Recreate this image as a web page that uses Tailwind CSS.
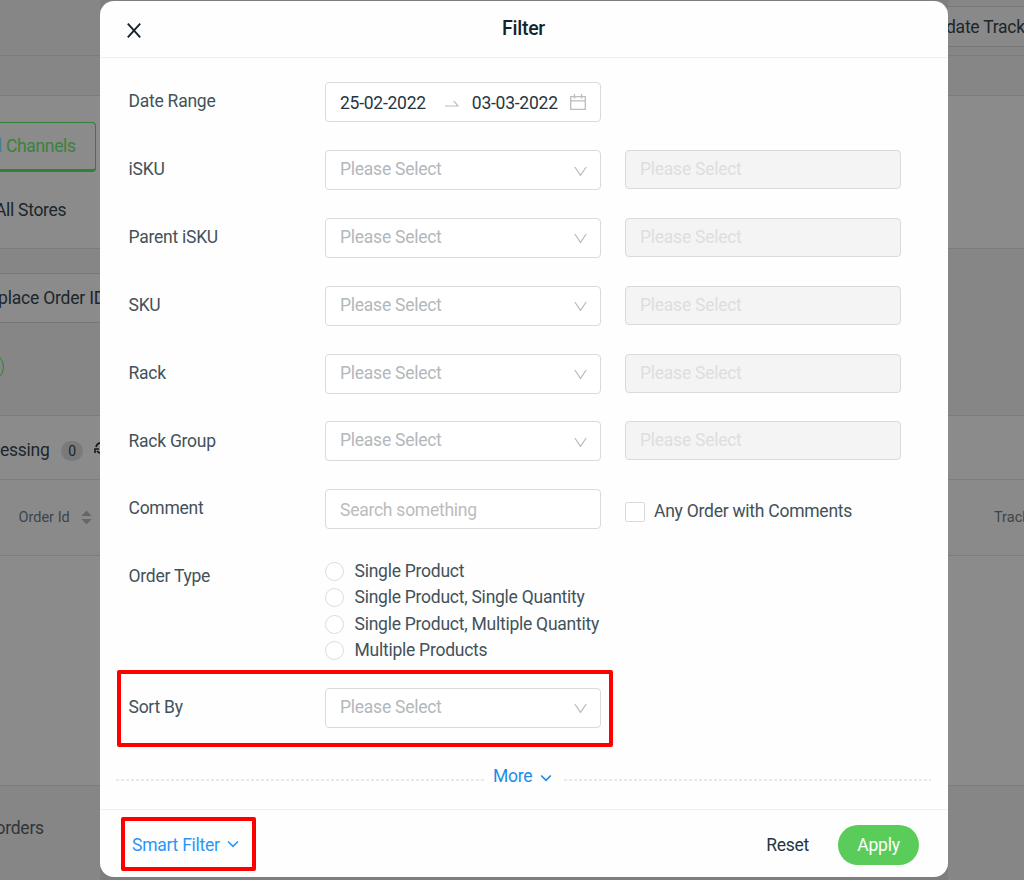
<!DOCTYPE html>
<html lang="en">
<head>
<meta charset="utf-8">
<title>Filter</title>
<script src="https://cdn.jsdelivr.net/npm/@tailwindcss/browser@4"></script>
</head>
<body class="font-['Roboto','Liberation_Sans',sans-serif] text-[17.5px] leading-6 tracking-[-0.25px]">
<div class="relative w-[1024px] h-[880px] overflow-hidden bg-[#8b8b8b] text-[#1c262c] whitespace-nowrap">

  <!-- page behind the dialog -->
  <div class="flex flex-col h-full">
    <div class="h-14 shrink-0 bg-[#868686] border-b border-[#7d7d7d] flex justify-end pt-1.5">
      <div class="w-[104px] h-[41px] border-y border-[#777777] bg-[#898989] flex items-center pl-[26px]"><span>date Track</span></div>
    </div>
    <div class="h-10 shrink-0 bg-[#868686] border-b border-[#7d7d7d]"></div>
    <div class="h-[153px] shrink-0 border-b border-[#7d7d7d] pt-[26px]">
      <div class="w-24 h-[50px] border border-l-0 border-b-[3px] border-[#338038] rounded-r-[4px] text-[#3a823d] flex items-center"><span class="text-[#4a7d96] -ml-[2px] w-[8px]">l</span><span class="tracking-[-0.35px]">Channels</span></div>
      <div class="mt-[26px] -ml-[5px]"><span class="tracking-[-0.3px]">All Stores</span></div>
    </div>
    <div class="h-[167px] shrink-0 bg-[#868686] border-b border-[#7d7d7d] pt-6">
      <div class="w-[110px] h-[50px] border-y border-[#777777] bg-[#8b8b8b] flex items-center"><span class="-ml-[2px] tracking-[-0.2px]">place Order ID</span></div>
      <div class="mt-[29px] -ml-[26px] w-[30px] h-[30px] rounded-full border border-[#338038]"></div>
    </div>
    <div class="h-16 shrink-0 border-b border-[#7d7d7d] flex items-center pt-[4px]">
      <span>essing</span>
      <span class="ml-[11.5px] w-[22px] h-5 rounded-full bg-[#7a7a7a] text-[14px] leading-[21px] text-center mt-[2px]">0</span>
      <svg class="ml-[11px] mb-[3px] shrink-0" width="14" height="14" viewBox="0 0 14 14" fill="none" stroke="#11191e" stroke-width="1.6"><path d="M2 6a5 5 0 0 1 9-2M12 8a5 5 0 0 1-9 2M1 12V8h4M12 1v4H8"/></svg>
    </div>
    <div class="h-[76px] shrink-0 border-b border-[#7d7d7d] bg-[#8a8a8a] flex items-center justify-between text-[14.5px] tracking-[0px] text-[#3d454a]">
      <div class="flex items-center pl-[18.5px] gap-[11px]"><span>Order Id</span>
        <svg class="shrink-0" width="11" height="15" viewBox="0 0 11 15" fill="#666"><path d="M5.500.500 10.500 6H.500zM5.500 14.500.500 9h10z"/></svg>
      </div>
      <div class="w-[30px]">Track</div>
    </div>
    <div class="h-[230px] shrink-0 border-b border-[#7d7d7d]"></div>
    <div class="grow bg-[#868686] pt-[30px] text-[#30363a]"><span class="-ml-[4.5px]">orders</span></div>
  </div>

  <!-- dialog -->
  <div class="absolute left-[100px] top-0 w-[848px] h-[880px] bg-[#7a7a7a]/60"></div>
  <div class="absolute left-[100px] top-px w-[848px] h-[876px] bg-[#fefefe] rounded-[14px] flex flex-col">
    <header class="h-[57px] shrink-0 border-b border-[#f0f0f0] relative flex items-center justify-center">
      <svg class="absolute left-[27px] top-[22px]" width="14" height="15" viewBox="0 0 14 15" fill="none" stroke="#13232d" stroke-width="1.9"><path d="M.8.700 13.200 14.300M13.200.700.800 14.300"/></svg>
      <h1 class="font-medium text-[19.5px] text-[#13232d] mb-[1px] mr-px">Filter</h1>
    </header>

    <div id="form" class="pt-[24.2px] pl-[28.5px] text-[#43525a]"></div>

    <div class="flex items-center h-6 mt-[15.800px] pl-4 pr-[17px] shrink-0">
      <div class="grow h-0.5 mt-[8px] bg-[repeating-linear-gradient(90deg,#e8e8e8_0_3px,transparent_3px_5px)]"></div>
      <div class="flex items-center w-[80px] pl-[9.5px] text-[#1d8ce8]"><span>More</span>
        <svg class="ml-[7.5px] mt-1 shrink-0" width="12" height="8" viewBox="0 0 12 8" fill="none" stroke="#1d8ce8" stroke-width="1.7"><path d="M1.200 1.500 6 6.300l4.800-4.800"/></svg></div>
      <div class="grow h-0.5 mt-[8px] bg-[repeating-linear-gradient(90deg,#e8e8e8_0_3px,transparent_3px_5px)]"></div>
    </div>

    <footer class="mt-auto h-[68px] shrink-0 border-t border-[#f0f0f0] flex items-center pl-8 pr-[29px]">
      <div class="flex items-center text-[#2b96f8] mt-[2px]"><span>Smart Filter</span>
        <svg class="ml-[7px] mb-[2px] shrink-0" width="12" height="8" viewBox="0 0 12 8" fill="none" stroke="#2b96f8" stroke-width="1.700"><path d="M1 1.500 6 6.300l5-4.800"/></svg></div>
      <div class="ml-auto text-[#26363f] mt-[2px]"><span>Reset</span></div>
      <button class="ml-[29px] w-[81px] h-10 rounded-full bg-[#5acc5a] text-white mt-[2px]">Apply</button>
    </footer>
  </div>

  <!-- highlight frames -->
  <div class="absolute left-[117px] top-[670px] w-[496px] h-[77px] border-4 border-[#fe0000] rounded-[2px]"></div>
  <div class="absolute left-[121px] top-[817px] w-[135px] h-[54px] border-4 border-[#fe0000] rounded-[2px]"></div>
</div>

<script>
  const chevron = '<svg class="ml-auto mt-[2px] shrink-0" width="13" height="11" viewBox="0 0 13 11" fill="none" stroke="#bdbdbd" stroke-width="1.300"><path d="M.8 1 6.500 9.300 12.200 1"/></svg>';
  const label = t => `<div class="w-[196px] shrink-0 pt-[7.2px]">${t}</div>`;
  const row = (h, body) => `<div class="flex items-start ${h}">${body}</div>`;
  const field = body => `<div class="w-[276.5px] h-10 shrink-0 border border-[#dadada] rounded-[4px] flex items-center pl-[14.5px] pr-[13px] bg-white">${body}</div>`;
  const select = field(`<span class="text-[#b2b8bc] mb-[2px]">Please Select</span>${chevron}`);
  const disabled = '<div class="ml-6 w-[276px] h-[39px] border border-[#dadada] rounded-[4px] flex items-center pl-[14px] bg-[#f4f4f4] text-[#dedede]"><span class="mb-px">Please Select</span></div>';
  const R = 'h-[67.84px]';
  const date = field(`<span class="text-[#26363f] mt-px">25-02-2022</span>
    <svg class="ml-[19px] mt-[2px] shrink-0" width="14" height="7" viewBox="0 0 14 7" fill="none" stroke="#bdbdbd" stroke-width="1.200"><path d="M0 6h13L8.800.800"/></svg>
    <span class="ml-[13px] mt-px text-[#26363f]">03-03-2022</span>
    <svg class="ml-auto mr-px shrink-0" width="16" height="16" viewBox="0 0 16 16" fill="none" stroke="#bdbdbd" stroke-width="1.300"><path d="M.700 2.600h14.600v12.700H.700zM.700 6.800h14.600M4.500 0v4.400M11.500 0v4.400"/></svg>`);
  const radios = ['Single Product', 'Single Product, Single Quantity', 'Single Product, Multiple Quantity', 'Multiple Products']
    .map(t => `<div class="flex items-center h-[26.6px]"><span class="w-[19px] h-[19px] mt-px rounded-full border border-[#dcdcdc] bg-white mr-[11px]"></span><span>${t}</span></div>`).join('');
  document.getElementById('form').innerHTML =
    row(R, label('Date Range') + date) +
    ['iSKU', 'Parent iSKU', 'SKU', 'Rack', 'Rack Group'].map(t => row(R, label(t) + select + disabled)).join('') +
    row(R, label('Comment') + field('<span class="text-[#bcbcbc] mt-px">Search something</span>') +
      '<div class="ml-6 mt-[10px] flex items-center"><span class="w-5 h-5 mt-px mr-[9px] rounded-[2px] border border-[#dadada] bg-white"></span><span>Any Order with Comments</span></div>') +
    row('h-[130.8px]', label('Order Type') + `<div class="pt-[0.3px]">${radios}</div>`) +
    row('h-[60px]', label('Sort By') + select);
</script>
</body>
</html>
